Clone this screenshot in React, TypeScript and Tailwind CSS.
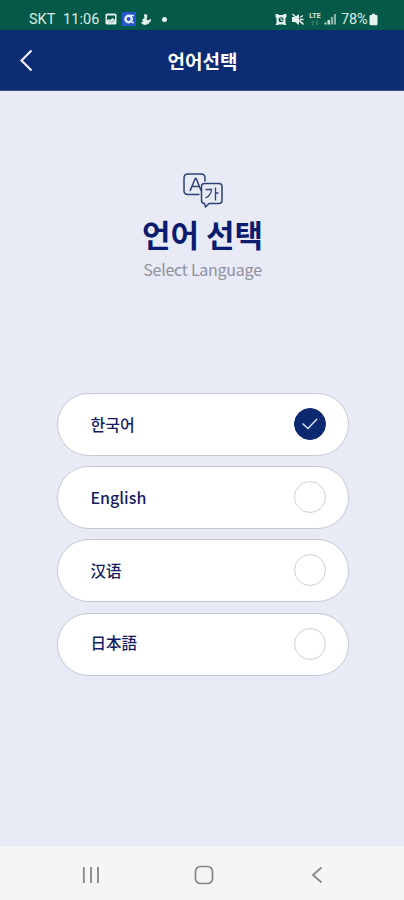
import { useState } from "react";
import clsx from "clsx";

const languages = [
  { code: "ko", label: "한국어", className: "text-[16px] pb-[2px]" },
  { code: "en", label: "English", className: "text-[16px] pb-[2px]" },
  { code: "zh", label: "汉语", className: "text-[15.5px] pb-px" },
  { code: "ja", label: "日本語", className: "text-[15.5px] pb-[2px]" },
];

const StatusBar = () => {
  return (
    <div className="flex h-[30px] shrink-0 items-center justify-between bg-[#045948] pl-[29px] pr-[26px] pt-[8px] font-['Roboto','Noto_Sans_CJK_KR',sans-serif] text-[14.5px] text-[#dcebe6]">
      <div className="flex items-center">
        <span className="w-[34px] whitespace-nowrap pt-[2px]">SKT</span>
        <span className="w-[42px] whitespace-nowrap pt-[2px] tracking-[0.1px]">11:06</span>
        {/* Gallery */}
        <svg width="12" height="12" viewBox="0 0 12 12">
          <rect x="0.5" y="0.5" width="11" height="11" rx="1.5" fill="#e4f1ec" />
          <path d="M2 2.500h8v4.500L7.500 5 5 7 3.500 6 2 7.500z" fill="#045948" />
          <path d="M2.500 9.500 4.500 7.500 6 8.500 8 6.500 10 9.500z" fill="#a9cabf" />
        </svg>
        <svg className="ml-[5px]" width="14" height="14" viewBox="0 0 14 14">
          <rect width="14" height="14" fill="#2457cf" />
          <circle cx="6.600" cy="7" r="3.200" fill="none" stroke="#e6eeff" strokeWidth="2.400" />
          <path d="M8 3.500h4M9.500 10.500H12" stroke="#e6eeff" strokeWidth="1.500" />
        </svg>
        <svg className="ml-[4px]" width="12" height="13" viewBox="0 0 12 13">
          <path
            d="M4 1.500c2-1 4 .3 3.200 2.500L6.500 6l1.200 1.500L10.500 6c1 .6.500 2.400-.9 3.600C8 11.800 5.500 12.500 3 11.600L.8 9.800l2-1L2.300 6.500 4.500 5z"
            fill="#e4f1ec"
          />
        </svg>
        <span className="ml-[10px] size-[5px] rounded-full bg-[#e4f1ec]" />
      </div>
      <div className="flex items-center">
        {/* Alarm */}
        <svg width="12" height="13" viewBox="0 0 12 13">
          <path d="M.5 1h3v1h5V1h3v3L10.500 5v5l1 2h-2L8 11.500H4L2.500 12h-2l1-2V5L.5 4z" fill="#e4f1ec" />
          <circle cx="6" cy="6.800" r="2.500" fill="#045948" />
          <path d="M6 5v2.300h2" fill="none" stroke="#e4f1ec" />
        </svg>
        {/* Muted speaker */}
        <svg className="ml-[4px]" width="13" height="13" viewBox="0 0 13 13">
          <path d="M1 4h3l4-3v11L4 9H1z" fill="#e4f1ec" />
          <path d="M9 4.500 12 2.500M9 6.500h3.500M9 8.500l3 2" stroke="#e4f1ec" strokeWidth="1.400" />
          <path d="m1.500 1 11 10.500" stroke="#e4f1ec" strokeWidth="1.400" />
        </svg>
        <span className="ml-[4px] flex w-[14px] flex-col items-center">
          <span className="text-[7px] font-bold leading-[7px]">LTE</span>
          <svg width="8" height="6" viewBox="0 0 8 6">
            <path d="M2 6V1L.5 2.500M6 0v5l1.500-1.500" fill="none" stroke="#4f8c7d" />
          </svg>
        </span>
        <svg className="ml-[2px]" width="13" height="12" viewBox="0 0 13 12">
          <path d="M.5 11.500V9.500h2v2zM3.500 11.500V7H6v4.500z" fill="#c9dfd7" />
          <path d="M6.800 11.500V4H9v7.500zM9.800 11.500V1H12v10.500z" fill="#89b3a7" />
        </svg>
        <span className="ml-[4px] w-[28px] whitespace-nowrap pt-px tracking-[-0.2px]">78%</span>
        <svg width="9" height="13" viewBox="0 0 9 13">
          <path d="M3 .8h3v1.200h1.500q1 0 1 1v8.200q0 1-1 1h-6q-1 0-1-1V3q0-1 1-1H3z" fill="#e4f1ec" />
        </svg>
      </div>
    </div>
  );
};

const Header = () => {
  return (
    <header className="grid h-[61px] shrink-0 grid-cols-[40px_1fr_40px] items-center border-b border-[#3f4f7b] bg-[#0b2b72]">
      <button aria-label="Back" className="pl-[19px]">
        <svg width="15" height="23" viewBox="0 0 15 23">
          <path d="M12.500 1.500 2.500 11.500l10 10" fill="none" stroke="#eef1fa" strokeWidth="2.200" />
        </svg>
      </button>
      <h1 className="pl-px text-center text-[19px] font-bold leading-none text-white">언어선택</h1>
    </header>
  );
};

const TranslateIcon = () => {
  return (
    <svg width="42" height="37" viewBox="0 0 42 37" fill="none" stroke="#2d4179" strokeWidth="1.500">
      <path d="M17.500 22.500H6q-4 0-4-4V6q0-4 4-4h13q4 0 4 4v3.500" />
      <path d="M8 19 13.200 6.500h1L19 18.500M9.800 14.500h7.400" />
      <path d="M22.500 11.500h14.500q3 0 3 3v14q0 3-3 3H27L23.500 35l-1-3.500q-3 0-3-3v-14q0-3 3-3z" strokeLinejoin="round" />
      <path d="M23.500 17.500h6q-.5 6-6 8.500M33.500 15.500v13M33.500 21h3" strokeWidth="1.300" />
    </svg>
  );
};

const NavigationBar = () => {
  return (
    <nav className="grid h-[54px] shrink-0 grid-cols-[113px_113px_113px] items-center justify-center bg-[#f5f5f5] pl-[3px] pt-[3px]">
      <svg className="mx-auto" width="18" height="18" viewBox="0 0 18 18">
        <path d="M1.800 1v16M9 1v16M16 1v16" stroke="#858585" strokeWidth="1.800" />
      </svg>
      <svg className="mx-auto" width="20" height="20" viewBox="0 0 20 20">
        <rect x="1.500" y="1.500" width="17" height="17" rx="5" fill="none" stroke="#858585" strokeWidth="1.700" />
      </svg>
      <svg className="mx-auto" width="12" height="18" viewBox="0 0 12 18">
        <path d="M10.500 1.500 2 9l8.500 7.500" fill="none" stroke="#858585" strokeWidth="1.700" />
      </svg>
    </nav>
  );
};

const App = () => {
  const [selected, setSelected] = useState("ko");

  return (
    <div className="flex h-[900px] w-[404px] flex-col bg-[#e8ebf6] font-['Noto_Sans_CJK_KR',sans-serif]">
      <StatusBar />
      <Header />
      <main className="flex flex-1 flex-col items-center pl-px pt-[81px]">
        <TranslateIcon />
        <h2 className="mt-[5px] text-[31px] font-bold leading-[40px] text-[#0b1b70]">언어 선택</h2>
        <p className="mt-[3px] text-[16px] leading-[24px] tracking-[-0.25px] text-[#8e919c]">Select Language</p>

        <div className="mt-[112px] flex w-[292px] flex-col gap-[10.200px]">
          {languages.map((lang) => (
            <button
              key={lang.code}
              lang={lang.code}
              onClick={() => setSelected(lang.code)}
              className="flex h-[63px] items-center justify-between rounded-full border border-[#c3c8d3] bg-white pl-[33px] pr-[21.500px]"
            >
              <span className={clsx("font-medium leading-none text-[#141c66]", lang.className)}>
                {lang.label}
              </span>
              <span
                className={clsx(
                  "mb-px flex size-[32px] items-center justify-center rounded-full border",
                  selected === lang.code ? "border-[#0b2870] bg-[#0b2870]" : "border-[#cfd0d5]"
                )}
              >
                {selected === lang.code && (
                  <svg width="18" height="14" viewBox="0 0 18 14">
                    <path d="m1.500 6.500 5.500 5 9-9.500" fill="none" stroke="#dbe2f3" strokeWidth="1.500" />
                  </svg>
                )}
              </span>
            </button>
          ))}
        </div>
      </main>
      <NavigationBar />
    </div>
  );
};

export default App;
